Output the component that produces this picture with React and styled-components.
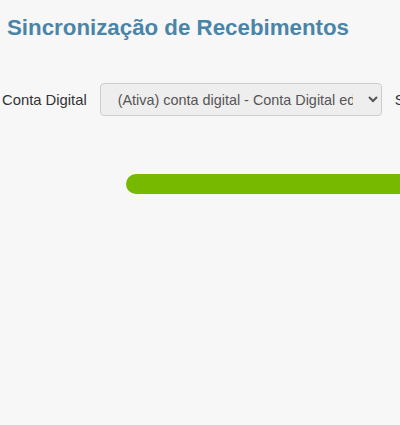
import React from "react";
import styled, { createGlobalStyle } from "styled-components";

const Global = createGlobalStyle`
  html, body { margin: 0; padding: 0; background: #f7f7f7; overflow: hidden; }
  body { font-family: "Liberation Sans", Arial, sans-serif; }
`;

const Page = styled.div`
  width: 400px;
  height: 425px;
  overflow: hidden;
  background: #f7f7f7;
`;

const Title = styled.h1`
  margin: 0;
  padding: 15px 0 0 7px;
  font-size: 22.3px;
  line-height: 26px;
  font-weight: bold;
  color: #4a85a8;
  white-space: nowrap;
`;

const FormRow = styled.div`
  display: flex;
  align-items: center;
  gap: 13px;
  margin-top: 42px;
  padding-left: 2px;
  white-space: nowrap;
`;

const Label = styled.label`
  font-size: 14.8px;
  color: #333;
  flex: none;
`;

const Select = styled.select`
  flex: none;
  width: 282px;
  height: 33px;
  padding: 0 12px 0 13px;
  font-family: "Liberation Sans", Arial, sans-serif;
  font-size: 14.4px;
  color: #555;
  background: #eeeeee;
  border: 1px solid #cccccc;
  border-radius: 4px;
`;

const ProgressTrack = styled.div`
  margin: 58px 0 0 126px;
  width: 600px;
  height: 20px;
  border-radius: 10px;
  background: #76b900;
`;

export default function App() {
  return (
    <Page>
      <Global />
      <Title>Sincronização de Recebimentos</Title>
      <FormRow>
        <Label>Conta Digital</Label>
        <Select defaultValue="1">
          <option value="1">(Ativa) conta digital - Conta Digital educacional</option>
        </Select>
        <Label>Saldo</Label>
      </FormRow>
      <ProgressTrack />
    </Page>
  );
}
